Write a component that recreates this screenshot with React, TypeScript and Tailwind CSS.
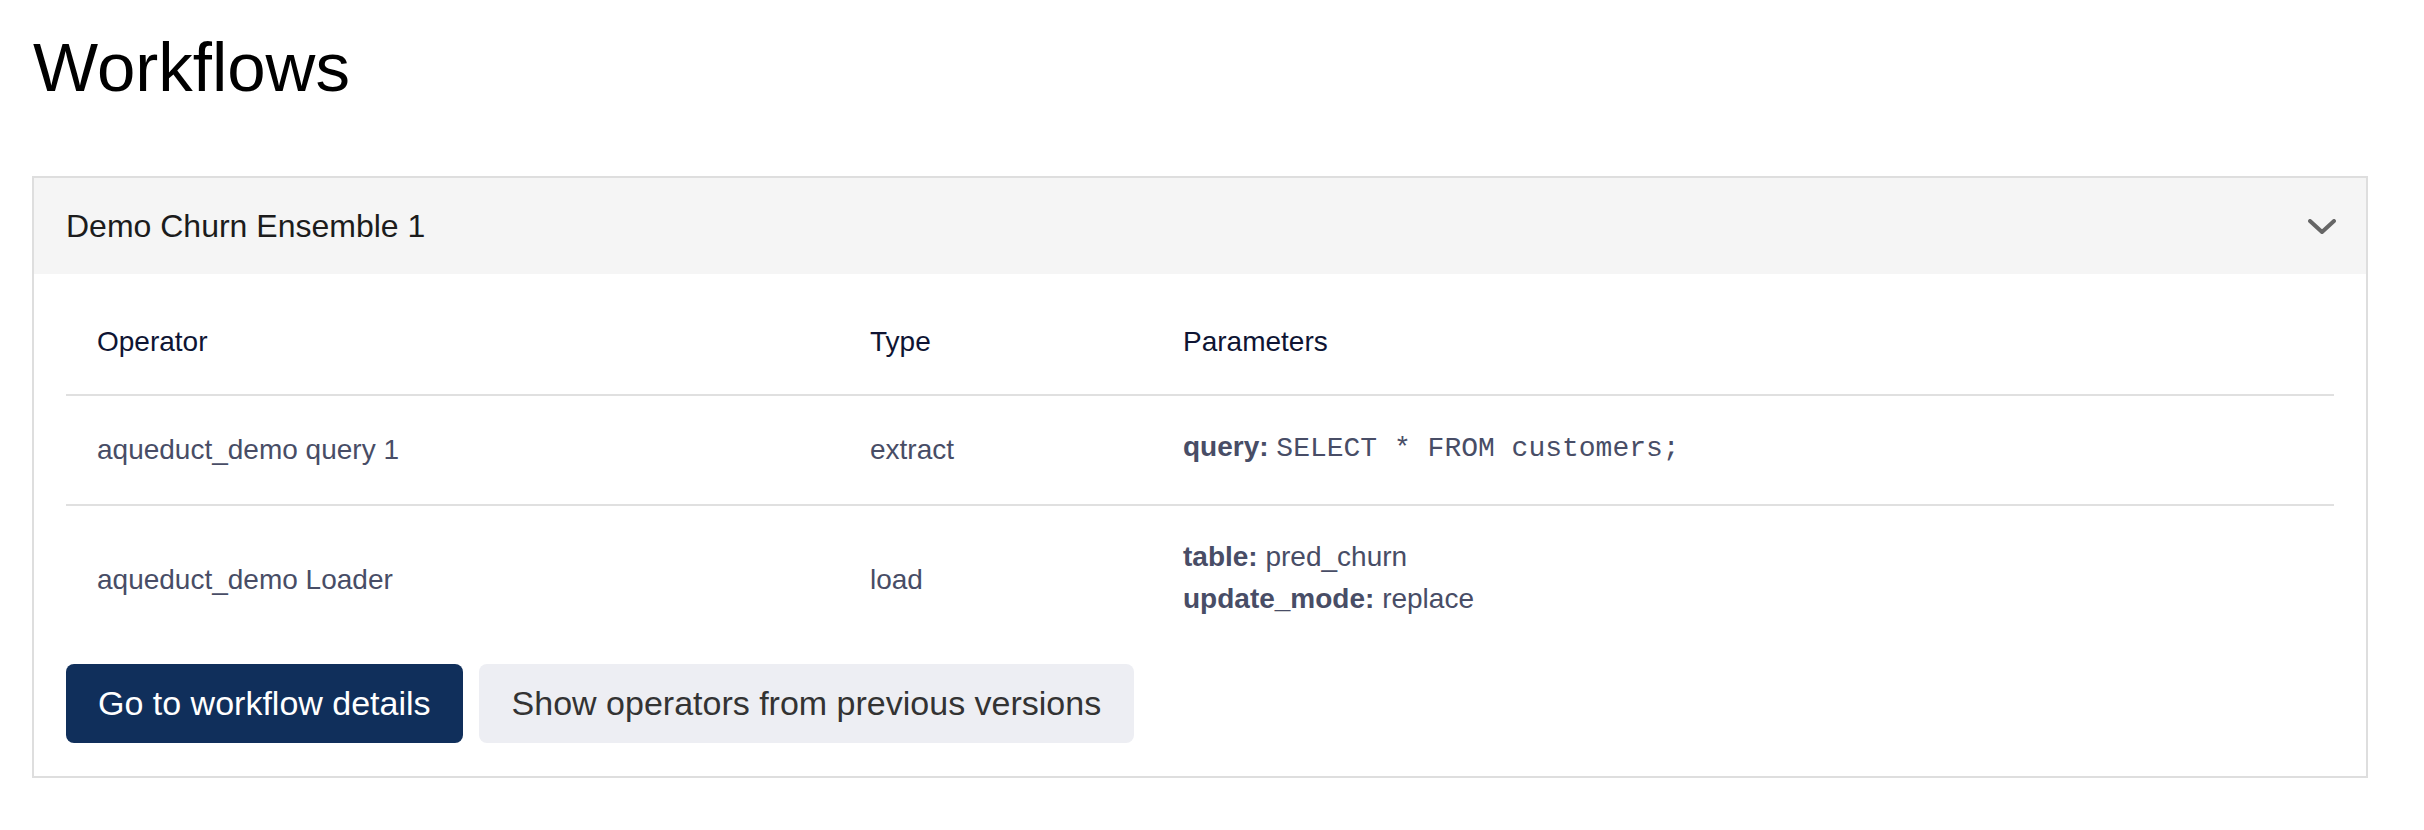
const rows = [
  {
    name: "aqueduct_demo query 1",
    type: "extract",
    params: [{ key: "query", value: "SELECT * FROM customers;", code: true }],
  },
  {
    name: "aqueduct_demo Loader",
    type: "load",
    params: [
      { key: "table", value: "pred_churn", code: false },
      { key: "update_mode", value: "replace", code: false },
    ],
  },
];

export default function App() {
  return (
    <div className="min-h-screen bg-white pl-[32px] pr-[56px] font-['Liberation_Sans',Arial,sans-serif]">
      <h1 className="pt-[28px] pl-[1px] text-[69px] leading-[80px] text-black">Workflows</h1>

      <section className="mt-[68px] border-2 border-[#dedede]">
        <div className="flex h-[96px] items-center justify-between bg-[#f5f5f5] pl-[32px] pr-[30px]">
          <span className="text-[32px] text-[#1c1c1c]">Demo Churn Ensemble 1</span>
          <svg width="28" height="16" viewBox="0 0 28 16" fill="none" className="mt-[2px]">
            <polyline points="2,2 14,13 26,2" stroke="#666" strokeWidth="4" strokeLinecap="round" strokeLinejoin="round" />
          </svg>
        </div>

        <div className="px-[32px] pt-[16px] pb-[33px]">
          <div className="grid grid-cols-[772px_313px_1fr] border-b-2 border-[#e0e0e0] text-[28px] leading-[40px] text-[#0e1433]">
            <div className="py-[32px] pl-[31px]">Operator</div>
            <div className="py-[32px] pl-[32px]">Type</div>
            <div className="py-[32px] pl-[32px]">Parameters</div>
          </div>

          {rows.map((r, i) => (
            <div
              key={r.name}
              className={
                "grid grid-cols-[772px_313px_1fr] items-center text-[28px] leading-[42px] text-[#484d66] " +
                (i < rows.length - 1 ? "border-b-2 border-[#e0e0e0]" : "")
              }
            >
              <div className="py-[32px] pl-[31px]">{r.name}</div>
              <div className="py-[32px] pl-[32px]">{r.type}</div>
              <div className="pt-[30px] pb-[34px] pl-[32px]">
                {r.params.map((p) => (
                  <div key={p.key}>
                    <span className="font-bold">{p.key}:</span>{" "}
                    {p.code ? (
                      <code className="font-['Liberation_Mono','Courier_New',monospace] text-[28px]">{p.value}</code>
                    ) : (
                      <span>{p.value}</span>
                    )}
                  </div>
                ))}
              </div>
            </div>
          ))}

          <div className="mt-[10px] flex gap-[16px]">
            <button className="flex h-[79px] items-center rounded-[8px] bg-[#102f5b] px-[32px] text-[34px] text-white">
              Go to workflow details
            </button>
            <button className="flex h-[79px] items-center rounded-[8px] bg-[#edeef3] px-[33px] text-[34px] text-[#333]">
              Show operators from previous versions
            </button>
          </div>
        </div>
      </section>
    </div>
  );
}
